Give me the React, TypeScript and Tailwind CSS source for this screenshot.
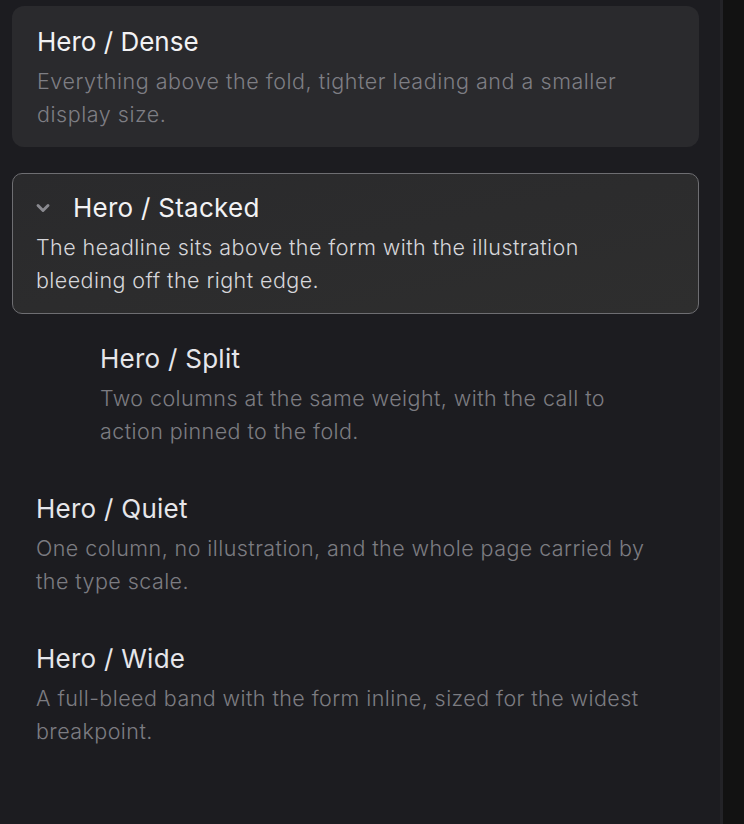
import { ChevronDown } from "lucide-react";

const font = { fontFamily: "Inter, 'Noto Sans', sans-serif" };

function Lines({ lines }: { lines: string[] }) {
  return (
    <>
      {lines.map((l) => (
        <span key={l} className="block whitespace-nowrap">
          {l}
        </span>
      ))}
    </>
  );
}

function Item({
  title,
  lines,
  indent = false,
}: {
  title: string;
  lines: string[];
  indent?: boolean;
}) {
  return (
    <div className={`mt-[10px] pr-6 pt-[17px] pb-[15px] ${indent ? "pl-[88px]" : "pl-6"}`}>
      <div className="text-[26px] leading-[38px] tracking-[0.01em] text-[#e6e6ea]">{title}</div>
      <div className="mt-[4px] text-[21.5px] leading-[33px] font-light tracking-[0.02em] text-[#7c7c82]">
        <Lines lines={lines} />
      </div>
    </div>
  );
}

export default function App() {
  return (
    <div className="flex h-[824px] w-[744px] bg-[#1c1c20]" style={font}>
      <div className="w-[720px] pl-3 pr-[21px] pt-[6px]">
        <div className="rounded-xl bg-[#2a2a2d] pl-[25px] pr-6 pt-[17px] pb-[16px]">
          <div className="text-[26px] leading-[38px] text-[#f2f2f4]">Hero / Dense</div>
          <div className="mt-[4px] text-[21.5px] leading-[33px] font-light tracking-[0.025em] text-[#7e7e84]">
            <Lines lines={["Everything above the fold, tighter leading and a smaller", "display size."]} />
          </div>
        </div>

        <div className="mt-[26px] rounded-[10px] border-[1.5px] border-[#6e6e72] bg-gradient-to-br from-[#2a2a2c] to-[#2e2e2e] pl-[23px] pr-6 pt-[15px] pb-[16px]">
          <div className="flex items-center">
            <ChevronDown className="-ml-[3px] size-[20px] text-[#8a8a90]" strokeWidth={3.5} />
            <div className="ml-[20px] text-[26px] leading-[38px] tracking-[0.01em] text-[#f2f2f4]">Hero / Stacked</div>
          </div>
          <div className="mt-[4px] text-[21.5px] leading-[33px] font-light tracking-[0.02em] text-[#d6d6da]">
            <Lines lines={["The headline sits above the form with the illustration", "bleeding off the right edge."]} />
          </div>
        </div>

        <div className="-mt-px">
          <Item
            indent
            title="Hero / Split"
            lines={["Two columns at the same weight, with the call to", "action pinned to the fold."]}
          />
        </div>
        <Item
          title="Hero / Quiet"
          lines={["One column, no illustration, and the whole page carried by", "the type scale."]}
        />
        <Item
          title="Hero / Wide"
          lines={["A full-bleed band with the form inline, sized for the widest", "breakpoint."]}
        />
      </div>
      <div className="w-[3px] bg-[#232327]" />
      <div className="flex-1 bg-[#121212]" />
    </div>
  );
}
